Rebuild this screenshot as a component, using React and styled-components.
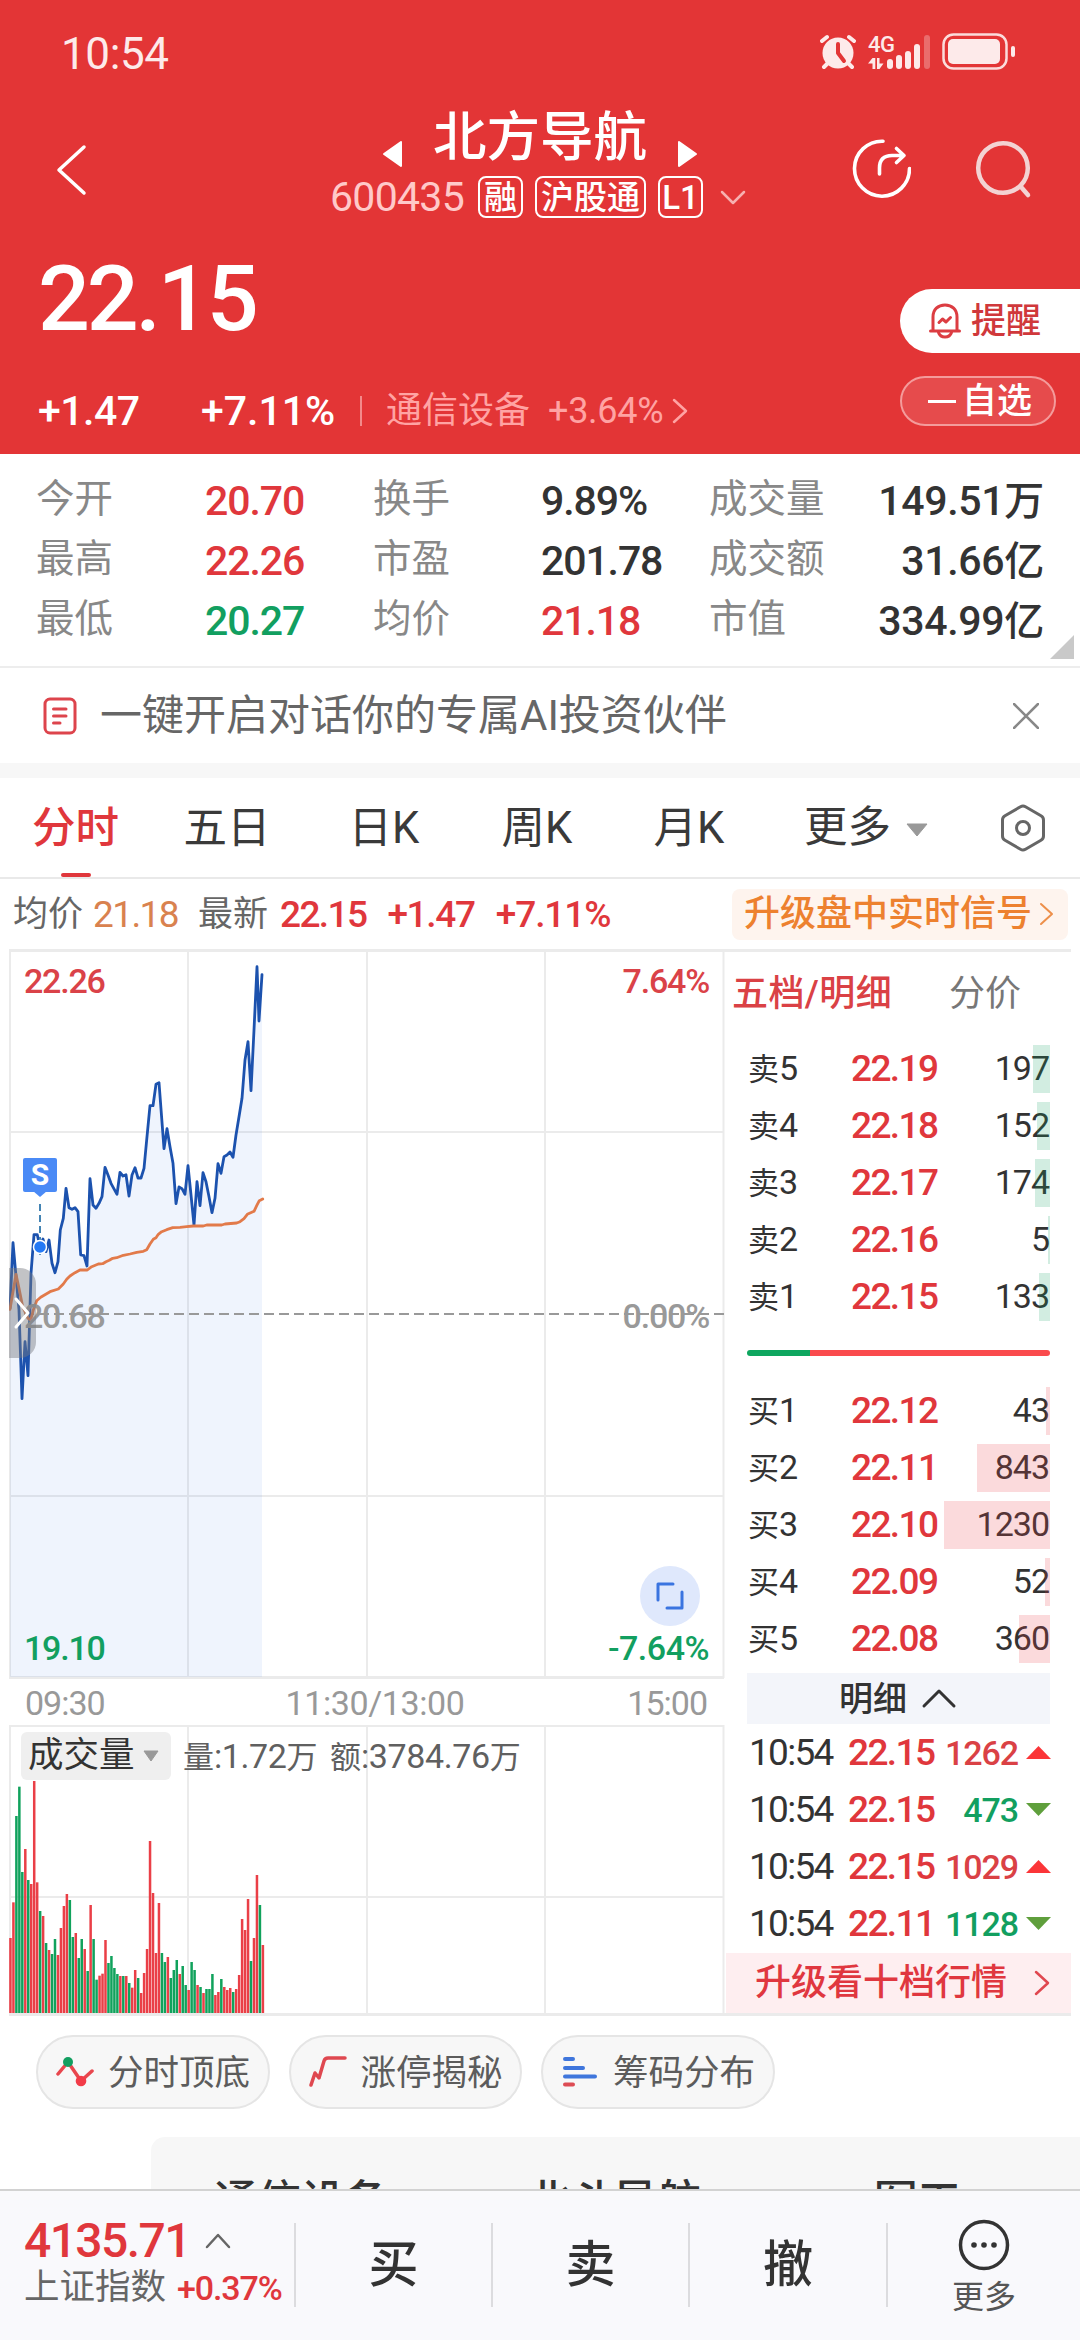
import React from "react";
import styled, { createGlobalStyle, css } from "styled-components";

const RED = "#e0373c";
const GREEN = "#129f60";
const INK = "#333333";
const GRAY = "#888888";
const LINE = "#ebebeb";

const GlobalStyle = createGlobalStyle`
  * { box-sizing: border-box; }
  body {
    margin: 0;
    background: #fff;
    font-family: Roboto, "Noto Sans CJK SC", sans-serif;
    color: ${INK};
  }
  svg { display: block; flex: none; }
`;

const Screen = styled.div`
  width: 1080px;
  height: 2340px;
  overflow: hidden;
  display: flex;
  flex-direction: column;
  background: #fff;
  line-height: 1;
  white-space: nowrap;
`;

/* ---------- shared ---------- */

const Num = styled.span`
  font-size: ${(p) => p.$size || 37}px;
  font-weight: ${(p) => p.$weight || 500};
  letter-spacing: ${(p) => (p.$ls === undefined ? -1.6 : p.$ls)}px;
  color: ${(p) => p.$color || "inherit"};
`;

const CHEVRONS = {
  left: (w, h) => `${w},0 0,${h / 2} ${w},${h}`,
  right: (w, h) => `0,0 ${w},${h / 2} 0,${h}`,
  up: (w, h) => `0,${h} ${w / 2},0 ${w},${h}`,
  down: (w, h) => `0,0 ${w / 2},${h} ${w},0`,
};

function Chevron({ dir, w, h, color, stroke = 2.5 }) {
  return (
    <svg width={w} height={h} viewBox={`0 0 ${w} ${h}`} overflow="visible">
      <polyline
        points={CHEVRONS[dir](w, h)}
        fill="none"
        stroke={color}
        strokeWidth={stroke}
        strokeLinecap="round"
        strokeLinejoin="round"
      />
    </svg>
  );
}

function Triangle({ dir, w, h, color, round = 0 }) {
  const shapes = {
    up: `0,${h} ${w / 2},0 ${w},${h}`,
    down: `0,0 ${w},0 ${w / 2},${h}`,
    left: `${w},0 0,${h / 2} ${w},${h}`,
    right: `0,0 ${w},${h / 2} 0,${h}`,
    corner: `${w},0 ${w},${h} 0,${h}`,
  };
  return (
    <svg width={w} height={h} viewBox={`0 0 ${w} ${h}`} overflow="visible">
      <polygon points={shapes[dir]} fill={color} stroke={color} strokeWidth={round} strokeLinejoin="round" />
    </svg>
  );
}

/* ---------- header ---------- */

const Header = styled.header`
  height: 454px;
  background: #e33536;
  color: #fff;
  display: flex;
  flex-direction: column;
`;

const StatusBar = styled.div`
  height: 106px;
  padding: 2px 64px 0 61px;
  display: flex;
  align-items: center;
  justify-content: space-between;
  color: #fdeaea;
`;

const StatusIcons = styled.div`
  display: flex;
  align-items: center;
  margin-top: -5px;
`;

const NavBar = styled.div`
  height: 134px;
  display: grid;
  grid-template-columns: 300px 1fr 300px;
`;

const NavBack = styled.div`
  padding: 41px 0 0 59px;
`;

const NavCenter = styled.div`
  display: flex;
  flex-direction: column;
`;

const StockName = styled.h1`
  margin: -1px 0 0;
  height: 66px;
  display: flex;
  align-items: center;
  justify-content: center;
  gap: 32px;
  font-size: 53.5px;
  font-weight: 500;
  svg { margin-top: 32px; }
`;

const StockMeta = styled.div`
  height: 50px;
  margin-top: 1px;
  padding-left: 30px;
  display: flex;
  align-items: center;
  color: #ffc9c9;
`;

const Tag = styled.span`
  height: 42px;
  width: ${(p) => p.$w}px;
  margin-right: 12px;
  border: 2px solid #fff;
  border-radius: 8px;
  display: flex;
  align-items: center;
  justify-content: center;
  font-size: 33px;
  font-weight: 500;
  color: #fff;
`;

const MetaChevron = styled.span`
  margin-left: 7px;
`;

const NavActions = styled.div`
  display: flex;
  padding: 33px 0 0 71px;
  gap: 63px;
`;

const QuoteArea = styled.div`
  flex: 1;
  display: grid;
  grid-template-columns: 1fr 180px;
`;

const QuoteMain = styled.div`
  padding: 10px 0 0 38px;
`;

const Price = styled.div`
  height: 98px;
  display: flex;
  align-items: center;
  font-size: 91.5px;
  font-weight: 500;
  letter-spacing: -3.2px;
`;

const ChangeRow = styled.div`
  margin-top: 43px;
  height: 40px;
  display: flex;
  align-items: center;
`;

const ChangeCell = styled.span`
  width: ${(p) => p.$w}px;
`;

const ChangeDivider = styled.span`
  width: 2px;
  height: 30px;
  margin-right: 24px;
  background: #f38a8a;
`;

const SectorLink = styled.span`
  display: flex;
  align-items: center;
  font-size: 36px;
  color: #ffa3a3;
`;

const SectorChange = styled(Num)`
  margin: 0 11px 0 18px;
`;

const QuoteSide = styled.div`
  padding-top: 49px;
  display: flex;
  flex-direction: column;
  align-items: flex-start;
  gap: 23px;
`;

const AlertButton = styled.div`
  width: 180px;
  height: 64px;
  padding-left: 28px;
  border-radius: 32px 0 0 32px;
  background: #fff;
  color: #d0383b;
  display: flex;
  align-items: center;
  gap: 9px;
  font-size: 35px;
  font-weight: 500;
`;

const WatchButton = styled.div`
  width: 156px;
  height: 50px;
  padding-left: 26px;
  border: 2px solid #f49b9b;
  border-radius: 25px;
  background: #e64b4c;
  display: flex;
  align-items: center;
  gap: 6px;
  font-size: 35px;
  font-weight: 500;
`;

const Minus = styled.span`
  width: 28px;
  height: 3px;
  background: #fff;
`;

/* ---------- stats ---------- */

const Stats = styled.section`
  height: 214px;
  padding: 15px 0 0 36px;
  border-bottom: 2px solid #ededed;
  display: flex;
`;

const StatGrid = styled.div`
  width: 1008px;
  height: 180px;
  display: grid;
  grid-template-columns: 169px 168px 168px 168px 120px 1fr;
  grid-template-rows: repeat(3, 60px);
  align-items: center;
`;

const StatLabel = styled.span`
  font-size: 38.5px;
  color: ${GRAY};
`;

const StatValue = styled.span`
  font-size: 41px;
  font-weight: 500;
  letter-spacing: ${(p) => (p.$end ? -0.3 : -1.1)}px;
  padding-top: 4px;
  color: ${(p) => p.$color || INK};
  text-align: ${(p) => (p.$end ? "right" : "left")};
  em { font-style: normal; font-size: 40px; }
`;

const StatCorner = styled.div`
  margin: 166px 0 0 6px;
`;

/* ---------- AI notice ---------- */

const Notice = styled.section`
  height: 95px;
  padding: 0 41px 0 43px;
  display: flex;
  align-items: center;
  font-size: 42px;
  color: #666;
  svg:last-child { margin-left: auto; }
`;

const NoticeText = styled.span`
  margin-left: 23px;
`;

const Gap = styled.div`
  height: 15px;
  background: #f7f7f7;
`;

/* ---------- tabs ---------- */

const Tabs = styled.nav`
  height: 101px;
  border-bottom: 2px solid #e9e9e9;
  display: grid;
  grid-template-columns: 151px 152px 162px 144px 160px 1fr 80px;
`;

const Tab = styled.div`
  display: flex;
  flex-direction: column;
  align-items: center;
  justify-content: flex-end;
  font-size: 43.5px;
  font-weight: ${(p) => (p.$active ? 500 : 400)};
  color: ${(p) => (p.$active ? RED : "#3a3a3a")};
  &::after {
    content: "";
    width: 30px;
    height: 4px;
    margin-top: 23px;
    border-radius: 2px;
    background: ${(p) => (p.$active ? RED : "transparent")};
  }
`;

const MoreTab = styled.div`
  display: flex;
  align-items: center;
  gap: 16px;
  padding-left: 35px;
  font-size: 43.5px;
  color: #3a3a3a;
  svg { margin-top: 4px; }
`;

const TabSettings = styled.div`
  display: flex;
  align-items: center;
`;

/* ---------- info strip ---------- */

const InfoStrip = styled.div`
  height: 70px;
  padding: 0 12px 0 13px;
  display: flex;
  align-items: center;
  font-size: 35px;
  color: #666;
`;

const InfoNum = styled(Num)`
  margin-left: ${(p) => p.$gap}px;
`;

const InfoLabel = styled.span`
  margin-left: ${(p) => p.$gap || 0}px;
`;

const SignalButton = styled.div`
  width: 336px;
  height: 51px;
  margin: 0 0 0 auto;
  padding: 0 16px 0 12px;
  border-radius: 8px;
  background: #fef4ee;
  color: #ed812f;
  display: flex;
  align-items: center;
  justify-content: space-between;
  font-size: 36px;
  font-weight: 500;
`;

/* ---------- market area ---------- */

const Market = styled.section`
  height: 1067px;
  margin: 0 9px;
  border-top: 3px solid ${LINE};
  border-bottom: 3px solid ${LINE};
  display: grid;
  grid-template-columns: 717px 1fr;
`;

const Charts = styled.div`
  display: flex;
  flex-direction: column;
`;

const PlotBox = styled.div`
  position: relative;
  height: ${(p) => p.$h}px;
`;

const PlotLabel = styled.span`
  position: absolute;
  font-size: 34px;
  font-weight: 500;
  letter-spacing: ${(p) => p.$ls || -1.2}px;
  color: ${(p) => p.$color};
  ${(p) => (p.$right ? css`right: 17px;` : css`left: 15px;`)}
  top: ${(p) => p.$top}px;
`;

const Handle = styled.div`
  position: absolute;
  left: 0;
  top: 316px;
  width: 27px;
  height: 90px;
  padding-left: 7px;
  border-radius: 0 16px 16px 0;
  background: rgba(120, 122, 128, 0.45);
  display: flex;
  align-items: center;
`;

const SellMarker = styled.div`
  position: absolute;
  left: 14px;
  top: 206px;
  width: 34px;
  height: 34px;
  border-radius: 2px;
  background: #4a8af6;
  color: #fff;
  display: flex;
  align-items: center;
  justify-content: center;
  font-size: 30px;
  font-weight: 700;
`;

const ExpandButton = styled.div`
  position: absolute;
  left: 631px;
  top: 614px;
  width: 60px;
  height: 60px;
  border-radius: 50%;
  background: #dfe8fc;
  display: flex;
  align-items: center;
  justify-content: center;
`;

const TimeAxis = styled.div`
  height: 45px;
  padding: 0 19px 0 16px;
  display: grid;
  grid-template-columns: 1fr auto 1fr;
  align-items: center;
  font-size: 34px;
  letter-spacing: -1px;
  color: #999;
  span:last-child { text-align: right; }
`;

const AxisMid = styled.span`
  padding-left: 18px;
  letter-spacing: -0.4px;
`;

const VolumeHead = styled.div`
  position: absolute;
  left: 12px;
  top: 7px;
  height: 48px;
  display: flex;
  align-items: center;
`;

const VolumePicker = styled.div`
  width: 150px;
  height: 48px;
  margin-right: 12px;
  padding-left: 7px;
  border-radius: 6px;
  background: #efefef;
  display: flex;
  align-items: center;
  gap: 9px;
  font-size: 35.5px;
`;

const VolumeText = styled.span`
  width: ${(p) => p.$w}px;
  font-size: 34px;
  letter-spacing: -0.4px;
  color: #606060;
  em { font-style: normal; font-size: 31px; letter-spacing: 0; }
`;

/* ---------- order book ---------- */

const Book = styled.aside`
  display: flex;
  flex-direction: column;
`;

const BookTabs = styled.div`
  height: 84px;
  padding-left: 6px;
  display: flex;
  align-items: center;
  font-size: 36px;
`;

const BookTab = styled.span`
  width: ${(p) => p.$w}px;
  letter-spacing: ${(p) => (p.$active ? 0.4 : 0)}px;
  color: ${(p) => (p.$active ? "#da4145" : "#777")};
  font-weight: ${(p) => (p.$active ? 500 : 400)};
`;

const BookBody = styled.div`
  width: 303px;
  margin-left: 21px;
  display: flex;
  flex-direction: column;
`;

const Levels = styled.div`
  display: flex;
  flex-direction: column;
  gap: 9px;
  padding: 9px 0;
`;

const LevelRow = styled.div`
  position: relative;
  height: 48px;
  padding: 0 0 2px 1px;
  display: grid;
  grid-template-columns: 103px 100px 1fr;
  align-items: center;
  font-size: 34px;
  em { font-style: normal; font-size: 31px; }
`;

const LevelVolume = styled.span`
  padding-right: 1px;
  text-align: right;
  letter-spacing: -1px;
`;

const LevelBar = styled.i`
  position: absolute;
  right: 0;
  top: 0;
  height: 48px;
  background: ${(p) => (p.$side === "sell" ? "rgba(18,159,96,0.19)" : "rgba(235,60,70,0.19)")};
`;

const Balance = styled.div`
  height: 6px;
  margin: 20px 0 22px;
  border-radius: 3px;
  background: linear-gradient(90deg, #0ea65f 63px, #fa4b4d 63px);
`;

const DetailToggle = styled.div`
  height: 51px;
  margin-top: 1px;
  padding-right: 4px;
  background: #f3f5fa;
  display: flex;
  align-items: center;
  justify-content: center;
  gap: 17px;
  font-size: 34px;
  font-weight: 500;
`;

const Ticks = styled.div`
  display: flex;
  flex-direction: column;
  height: 229px;
`;

const Tick = styled.div`
  height: 57px;
  display: grid;
  grid-template-columns: 99px 90px 80px 1fr;
  align-items: center;
  padding: 0 0 0 2px;
  svg { margin-left: 8px; }
`;

const TickVolume = styled(Num)`
  text-align: right;
`;

const Upgrade = styled.div`
  height: 60px;
  padding: 0 23px 0 29px;
  background: #feeef0;
  color: #e0373f;
  display: flex;
  align-items: center;
  justify-content: space-between;
  font-size: 36px;
  font-weight: 500;
`;

/* ---------- lower part ---------- */

const Chips = styled.div`
  display: flex;
  gap: 19px;
  padding: 19px 36px 28px;
`;

const Chip = styled.div`
  width: 233.5px;
  height: 74px;
  padding-left: 18px;
  border: 2px solid #e5e5e5;
  border-radius: 37px;
  background: #f7f7f7;
  display: flex;
  align-items: center;
  gap: 14px;
  font-size: 35.5px;
  color: #5c5c5c;
  span { padding-top: 3px; }
`;

const BoardCard = styled.div`
  height: 52px;
  margin-left: 151px;
  padding: 43px 0 0 63px;
  overflow: hidden;
  border-top-left-radius: 14px;
  background: #f7f7f7;
  display: grid;
  grid-template-columns: 313px 347px 1fr;
  font-size: 43.5px;
  font-weight: 500;
`;

const BottomBar = styled.footer`
  height: 151px;
  border-top: 2px solid #d2d2d2;
  background: #f9f9fc;
  display: grid;
  grid-template-columns: 294px 197px 197px 198px 1fr;
  padding-top: 32px;
`;

const IndexBox = styled.div`
  padding-left: 24px;
  display: flex;
  flex-direction: column;
`;

const IndexLine = styled.div`
  height: ${(p) => p.$h}px;
  display: flex;
  align-items: center;
  gap: ${(p) => p.$gap}px;
  font-size: 35.5px;
  color: #666;
`;

const TradeAction = styled.div`
  height: 84px;
  border-left: 2px solid #dcdcdf;
  display: flex;
  align-items: center;
  justify-content: center;
  font-size: 50px;
  font-weight: 500;
`;

const MoreAction = styled.div`
  height: 84px;
  border-left: 2px solid #dcdcdf;
  display: flex;
  flex-direction: column;
  align-items: center;
  font-size: 32px;
  color: #555;
  gap: 10px;
  svg { margin-top: -4px; }
`;

/* ---------- icons ---------- */

const AlarmIcon = () => (
  <svg width="36" height="36" viewBox="0 0 36 36">
    <g stroke="#fdeaea" strokeWidth="4" strokeLinecap="round">
      <path d="M2 7 7 3M29 3l5 4M8 29l-4 4M28 29l4 4" />
    </g>
    <circle cx="18" cy="19" r="15.5" fill="#fdeaea" />
    <path d="M18 10v9l6 8" fill="none" stroke="#e33536" strokeWidth="4" strokeLinecap="round" strokeLinejoin="round" />
  </svg>
);

const SignalBox = styled.div`
  display: flex;
  flex-direction: column;
  width: 62px;
  height: 36px;
  margin: 0 12px 0 12px;
  position: relative;
  font-size: 22px;
  font-weight: 500;
  letter-spacing: -0.5px;
  svg { position: absolute; left: 0; top: 0; }
`;

const SignalIcon = () => (
  <SignalBox>
    4G
    <svg width="62" height="36" viewBox="0 0 62 36">
      <g fill="#fdeaea">
        <rect x="19" y="25" width="6" height="10" rx="3" />
        <rect x="28" y="21" width="6" height="14" rx="3" />
        <rect x="37" y="17" width="6" height="18" rx="3" />
        <rect x="46" y="10" width="6" height="25" rx="3" />
        <rect x="56" y="1" width="6" height="34" rx="3" opacity=".3" />
        <path d="M4.500 24v11h2.800V24zM4.500 24 0 29.500h4.500zM9 24v11h2.500V24zM11.500 35l4-5.500h-4z" />
      </g>
    </svg>
  </SignalBox>
);

const BatteryIcon = () => (
  <svg width="74" height="38" viewBox="0 0 74 38">
    <rect x="1.500" y="1.500" width="63" height="34" rx="10" fill="none" stroke="#fbdcdc" strokeWidth="2.500" />
    <rect x="6" y="6" width="52" height="25" rx="5" fill="#fdeaea" />
    <rect x="69" y="13" width="4" height="11" rx="2" fill="#fdeaea" />
  </svg>
);

const ShareIcon = () => (
  <svg width="60" height="60" viewBox="0 0 60 60" fill="none" stroke="#fff" strokeWidth="3.600" strokeLinecap="round" strokeLinejoin="round">
    <path d="M32 2.200A27.500 27.500 0 1 0 58.500 29.500" />
    <path d="M28.500 35V29q0-12.500 12.500-12.500H53M45.500 9.500 53 16.500 45.500 23.500" />
  </svg>
);

const SearchIcon = () => (
  <svg width="58" height="60" viewBox="0 0 58 60" fill="none" stroke="#f3d3d3" strokeWidth="4.500" strokeLinecap="round">
    <circle cx="29" cy="29" r="24.800" />
    <path d="M47.500 48.500 54 56" />
  </svg>
);

const BellIcon = () => (
  <svg width="34" height="36" viewBox="0 0 34 36" fill="none" stroke="#dc3d42" strokeWidth="3" strokeLinecap="round" strokeLinejoin="round">
    <path d="M2.500 28H31.500M5 27V14C5 6.500 10 2 17 2S29 6.500 29 14V27" />
    <path d="M10.500 29.500Q12 34 17 34T23.500 29.500" />
    <path d="M11 19.500 14.500 16 18 19 22.500 14.500" />
  </svg>
);

const NoticeIcon = () => (
  <svg width="34" height="38" viewBox="0 0 34 38" fill="none" stroke="#dd444c" strokeWidth="3" strokeLinecap="round">
    <rect x="2" y="2" width="30" height="34" rx="5" />
    <path d="M10.500 12H23M10.500 19H23M10.500 26H17" />
  </svg>
);

const CloseIcon = () => (
  <svg width="26" height="26" viewBox="0 0 26 26" stroke="#888" strokeWidth="2.500" strokeLinecap="round">
    <path d="M1 1 25 25M25 1 1 25" />
  </svg>
);

const HexIcon = () => (
  <svg width="46" height="48" viewBox="0 0 46 48" fill="none" stroke="#666" strokeWidth="3" strokeLinejoin="round">
    <path d="M20.500 2.700Q23 1.300 25.500 2.700L41 11.800Q43.500 13.300 43.500 16V32Q43.500 34.700 41 36.200L25.500 45.300Q23 46.700 20.500 45.300L5 36.200Q2.500 34.700 2.500 32V16Q2.500 13.300 5 11.800Z" />
    <circle cx="23" cy="24" r="6.500" />
  </svg>
);

const TopBottomIcon = () => (
  <svg width="38" height="32" viewBox="0 0 38 32">
    <path d="M2 18 12 6 25 25 36 15" fill="none" stroke="#e8474e" strokeWidth="3.500" strokeLinecap="round" strokeLinejoin="round" />
    <circle cx="12" cy="6" r="5" fill="#129f60" />
    <circle cx="25" cy="25" r="5.300" fill="#f23c48" />
  </svg>
);

const LimitUpIcon = () => (
  <svg width="38" height="32" viewBox="0 0 38 32">
    <path d="M2 29 6 17 10 22 15 5Q16 2 19 2H36" fill="none" stroke="#df4850" strokeWidth="3.500" strokeLinecap="round" strokeLinejoin="round" />
  </svg>
);

const ChipsIcon = () => (
  <svg width="38" height="32" viewBox="0 0 38 32" strokeWidth="4" strokeLinecap="round">
    <path d="M4 3H12M4 12H22M4 20.500H34" stroke="#3f76dc" />
    <path d="M4 28.500H12" stroke="#dd4c54" />
  </svg>
);

const ExpandIcon = () => (
  <svg width="28" height="28" viewBox="0 0 28 28" fill="none" stroke="#3a74e0" strokeWidth="3" strokeLinecap="round" strokeLinejoin="round">
    <path d="M2 18V2H17M26 10V26H11" />
  </svg>
);

const DotsIcon = () => (
  <svg width="52" height="52" viewBox="0 0 52 52">
    <circle cx="26" cy="26" r="23.500" fill="none" stroke="#333" strokeWidth="3.500" />
    <circle cx="16" cy="26" r="2.800" fill="#333" />
    <circle cx="26" cy="26" r="2.800" fill="#333" />
    <circle cx="36" cy="26" r="2.800" fill="#333" />
  </svg>
);

/* ---------- data ---------- */

const STATS = [
  ["今开", "20.70", RED], ["换手", "9.89%"], ["成交量", "149.51", null, "万"],
  ["最高", "22.26", RED], ["市盈", "201.78"], ["成交额", "31.66", null, "亿"],
  ["最低", "20.27", GREEN], ["均价", "21.18", RED], ["市值", "334.99", null, "亿"],
];

const SELLS = [
  ["卖", 5, "22.19", 197, 17], ["卖", 4, "22.18", 152, 13], ["卖", 3, "22.17", 174, 15],
  ["卖", 2, "22.16", 5, 2], ["卖", 1, "22.15", 133, 11],
];

const BUYS = [
  ["买", 1, "22.12", 43, 4], ["买", 2, "22.11", 843, 73], ["买", 3, "22.10", 1230, 106],
  ["买", 4, "22.09", 52, 5], ["买", 5, "22.08", 360, 31],
];

const TICKS = [
  ["22.15", 1262, "up"], ["22.15", 473, "down"], ["22.15", 1029, "up"], ["22.11", 1128, "down"],
];

/* Chart points are kept in thirds of a pixel, origin at the plot's top left. */
const PRICE = [
  30, 1105, 39, 908, 57, 1110, 66, 1376, 75, 1205, 84, 1307, 93, 1000, 102, 884, 112, 884, 120, 920,
  129, 897, 138, 935, 147, 900, 156, 970, 165, 998, 174, 965, 181, 870, 190, 835, 198, 745, 207, 803,
  216, 808, 225, 803, 234, 815, 242, 945, 252, 947, 261, 978, 270, 716, 279, 795, 288, 805, 297, 790,
  306, 770, 315, 682, 324, 705, 333, 730, 351, 763, 360, 697, 369, 708, 378, 704, 387, 768, 396, 705,
  405, 683, 414, 714, 423, 714, 432, 685, 441, 590, 450, 497, 459, 497, 468, 433, 477, 428, 492, 626,
  501, 566, 510, 620, 519, 670, 528, 791, 537, 741, 546, 746, 555, 763, 564, 677, 573, 765, 582, 855,
  591, 725, 600, 797, 609, 698, 618, 725, 627, 770, 636, 818, 645, 775, 654, 671, 663, 700, 672, 650,
  681, 645, 690, 636, 699, 652, 708, 585, 717, 530, 726, 475, 735, 360, 744, 305, 753, 452, 762, 270,
  771, 80, 777, 243, 786, 104,
];

const AVERAGE = [
  30, 1108, 48, 1003, 57, 1045, 68, 1100, 84, 1135, 92, 1140, 100, 1110, 110, 1082, 122, 1072, 150, 1055,
  175, 1047, 190, 1032, 200, 1018, 210, 1008, 225, 998, 240, 990, 262, 990, 275, 980, 295, 972, 308, 971,
  318, 965, 328, 961, 338, 955, 350, 953, 370, 946, 390, 942, 410, 937, 430, 934, 440, 929, 450, 912,
  460, 898, 468, 893, 475, 883, 485, 875, 500, 869, 518, 863, 540, 862, 560, 860, 580, 858, 610, 858,
  620, 855, 665, 855, 675, 852, 710, 849, 720, 845, 732, 836, 742, 823, 762, 814, 770, 797, 778, 782, 788, 777,
];

const toPoints = (flat) => {
  const out = [];
  for (let i = 0; i < flat.length; i += 2) {
    out.push(`${(flat[i] / 3 - 9).toFixed(1)},${((flat[i + 1] - 36) / 3).toFixed(1)}`);
  }
  return out.join(" ");
};

const VOLUME_TOPS = [
  897, 790, 531, 443, 699, 630, 723, 735, 426, 730, 816, 831, 912, 933, 945, 900, 948, 867, 801, 765,
  783, 894, 882, 957, 900, 930, 996, 798, 900, 1022, 1010, 1004, 903, 972, 951, 987, 1005, 1011, 1011, 1011,
  1032, 1046, 993, 1017, 1062, 1002, 930, 606, 762, 942, 792, 942, 969, 954, 1017, 993, 963, 1005, 981, 1038,
  1053, 969, 993, 1038, 1044, 1062, 1050, 1050, 1005, 1068, 1059, 1020, 1044, 1053, 1047, 1059, 1050, 1008,
  840, 873, 780, 966, 897, 708, 798, 918,
];
const VOLUME_SIDES =
  "rrgggrgrrrgrgrggrrrrggrggrgrggrrrggggrgrgrrgrrrrrrrggrgggrgg" + "rggrgrgggrrgrrrgrrrrrgrrgr";

const GRID_X = [1, 179, 358, 536, 714.5];

function PricePlot() {
  const price = toPoints(PRICE);
  return (
    <svg width="717" height="728" viewBox="0 0 717 728">
      <g stroke={LINE} strokeWidth="2">
        {GRID_X.map((x) => <line key={x} x1={x} x2={x} y1="0" y2="726" />)}
        <line x1="0" x2="715" y1="180" y2="180" />
        <line x1="0" x2="715" y1="544" y2="544" />
        <line x1="0" x2="715" y1="725.5" y2="725.5" strokeWidth="3" />
      </g>
      <polygon points={`1,725 ${price} 253,725`} fill="rgba(65,125,235,0.085)" />
      <line x1="15" x2="715" y1="362" y2="362" stroke="#999" strokeWidth="2" strokeDasharray="10 5" />
      <polyline points={price} fill="none" stroke="#1c52ae" strokeWidth="2.8" strokeLinejoin="round" strokeLinecap="round" />
      <polyline points={toPoints(AVERAGE)} fill="none" stroke="#e27a4a" strokeWidth="2.8" strokeLinejoin="round" strokeLinecap="round" />
      <path d="M24 239h14l-7 6z" fill="#4a8af6" />
      <line x1="31" x2="31" y1="252" y2="306" stroke="#4384b4" strokeWidth="2" strokeDasharray="7 4" />
      <circle cx="31" cy="295" r="6.5" fill="#2479f5" stroke="#fff" strokeWidth="1.5" />
    </svg>
  );
}

function VolumePlot() {
  return (
    <svg width="717" height="288" viewBox="0 0 717 288">
      <g stroke={LINE} strokeWidth="2">
        {GRID_X.map((x) => <line key={x} x1={x} x2={x} y1="0" y2="288" />)}
        <line x1="0" x2="715" y1="1" y2="1" />
        <line x1="0" x2="715" y1="172" y2="172" />
      </g>
      {VOLUME_TOPS.map((top, i) => {
        const h = (1122 - top) / 3;
        return (
          <rect
            key={i}
            x={0.2 + i * 2.97}
            y={288 - h}
            width="2.5"
            height={h}
            fill={VOLUME_SIDES[i] === "r" ? "#ea3f47" : "#10a25c"}
          />
        );
      })}
    </svg>
  );
}

function LevelList({ rows, side }) {
  return (
    <Levels>
      {rows.map(([name, n, price, volume, width]) => (
        <LevelRow key={n}>
          <span><em>{name}</em>{n}</span>
          <Num $color={RED}>{price}</Num>
          <LevelVolume>{volume}</LevelVolume>
          <LevelBar $side={side} style={{ width }} />
        </LevelRow>
      ))}
    </Levels>
  );
}

export default function App() {
  return (
    <Screen>
      <GlobalStyle />
      <Header>
        <StatusBar>
          <Num $size={44} $weight={400} $ls={-0.4}>10:54</Num>
          <StatusIcons>
            <AlarmIcon />
            <SignalIcon />
            <BatteryIcon />
          </StatusIcons>
        </StatusBar>
        <NavBar>
          <NavBack><Chevron dir="left" w={25} h={46} color="#fff" stroke={3.5} /></NavBack>
          <NavCenter>
            <StockName>
              <Triangle dir="left" w={17} h={24} color="#fff" round={2} />
              <span>北方导航</span>
              <Triangle dir="right" w={17} h={24} color="#fff" round={2} />
            </StockName>
            <StockMeta>
              <ChangeCell $w={148}><Num $size={41} $weight={400} $ls={-0.7}>600435</Num></ChangeCell>
              <Tag $w={45}>融</Tag>
              <Tag $w={111}>沪股通</Tag>
              <Tag $w={45}>L1</Tag>
              <MetaChevron><Chevron dir="down" w={22} h={11} color="#f7b0b0" /></MetaChevron>
            </StockMeta>
          </NavCenter>
          <NavActions>
            <ShareIcon />
            <SearchIcon />
          </NavActions>
        </NavBar>
        <QuoteArea>
          <QuoteMain>
            <Price>22.15</Price>
            <ChangeRow>
              <ChangeCell $w={163}><Num $size={41} $ls={-0.5}>+1.47</Num></ChangeCell>
              <ChangeCell $w={159}><Num $size={41} $ls={0}>+7.11%</Num></ChangeCell>
              <ChangeDivider />
              <SectorLink>
                通信设备
                <SectorChange $size={36} $weight={400} $ls={-0.3}>+3.64%</SectorChange>
                <Chevron dir="right" w={12} h={22} color="#ffa3a3" />
              </SectorLink>
            </ChangeRow>
          </QuoteMain>
          <QuoteSide>
            <AlertButton><BellIcon />提醒</AlertButton>
            <WatchButton><Minus />自选</WatchButton>
          </QuoteSide>
        </QuoteArea>
      </Header>

      <Stats>
        <StatGrid>
          {STATS.map(([label, value, color, unit], i) => (
            <React.Fragment key={i}>
              <StatLabel>{label}</StatLabel>
              <StatValue $color={color} $end={i % 3 === 2}>{value}{unit && <em>{unit}</em>}</StatValue>
            </React.Fragment>
          ))}
        </StatGrid>
        <StatCorner><Triangle dir="corner" w={24} h={24} color="#c9c9c9" /></StatCorner>
      </Stats>

      <Notice>
        <NoticeIcon />
        <NoticeText>一键开启对话你的专属AI投资伙伴</NoticeText>
        <CloseIcon />
      </Notice>
      <Gap />

      <Tabs>
        <Tab $active>分时</Tab>
        <Tab>五日</Tab>
        <Tab>日K</Tab>
        <Tab>周K</Tab>
        <Tab>月K</Tab>
        <MoreTab>更多<Triangle dir="down" w={20} h={12} color="#999" round={1} /></MoreTab>
        <TabSettings><HexIcon /></TabSettings>
      </Tabs>

      <InfoStrip>
        <span>均价</span>
        <InfoNum $gap={10} $weight={400} $color="#d9824f">21.18</InfoNum>
        <InfoLabel $gap={20}>最新</InfoLabel>
        <InfoNum $gap={12} $color={RED}>22.15</InfoNum>
        <InfoNum $gap={21} $ls={-1.3} $color={RED}>+1.47</InfoNum>
        <InfoNum $gap={21} $ls={-1.1} $color={RED}>+7.11%</InfoNum>
        <SignalButton>
          升级盘中实时信号
          <Chevron dir="right" w={11} h={20} color="#ed8f4a" stroke={2} />
        </SignalButton>
      </InfoStrip>

      <Market>
        <Charts>
          <PlotBox $h={728}>
            <PricePlot />
            <PlotLabel $top={12} $color="#da4248">22.26</PlotLabel>
            <PlotLabel $top={12} $right $color="#da4248">7.64%</PlotLabel>
            <PlotLabel $top={347} $color="#999">20.68</PlotLabel>
            <PlotLabel $top={347} $right $color="#999">0.00%</PlotLabel>
            <PlotLabel $top={679} $color={GREEN}>19.10</PlotLabel>
            <PlotLabel $top={679} $right $ls={-0.5} $color={GREEN}>-7.64%</PlotLabel>
            <Handle><Chevron dir="right" w={12} h={28} color="#fff" stroke={3} /></Handle>
            <SellMarker>S</SellMarker>
            <ExpandButton><ExpandIcon /></ExpandButton>
          </PlotBox>
          <TimeAxis>
            <span>09:30</span>
            <AxisMid>11:30/13:00</AxisMid>
            <span>15:00</span>
          </TimeAxis>
          <PlotBox $h={288}>
            <VolumePlot />
            <VolumeHead>
              <VolumePicker>成交量<Triangle dir="down" w={14} h={10} color="#999" round={1} /></VolumePicker>
              <VolumeText $w={147}><em>量</em>:1.72<em>万</em></VolumeText>
              <VolumeText $w={200}><em>额</em>:3784.76<em>万</em></VolumeText>
            </VolumeHead>
          </PlotBox>
        </Charts>
        <Book>
          <BookTabs>
            <BookTab $active $w={217}>五档/明细</BookTab>
            <BookTab>分价</BookTab>
          </BookTabs>
          <BookBody>
            <LevelList rows={SELLS} side="sell" />
            <Balance />
            <LevelList rows={BUYS} side="buy" />
            <DetailToggle>
              明细
              <Chevron dir="up" w={30} h={15} color={INK} stroke={3} />
            </DetailToggle>
            <Ticks>
              {TICKS.map(([price, volume, dir], i) => (
                <Tick key={i}>
                  <Num $weight={400} $ls={-1.7}>10:54</Num>
                  <Num $color={RED}>{price}</Num>
                  <TickVolume $size={34} $ls={-1.1} $color={dir === "up" ? "#da4145" : GREEN}>{volume}</TickVolume>
                  <Triangle dir={dir} w={25} h={13} color={dir === "up" ? "#fb3538" : "#5f9f3c"} />
                </Tick>
              ))}
            </Ticks>
          </BookBody>
          <Upgrade>
            升级看十档行情
            <Chevron dir="right" w={12} h={22} color="#e0474f" />
          </Upgrade>
        </Book>
      </Market>

      <Chips>
        <Chip><TopBottomIcon /><span>分时顶底</span></Chip>
        <Chip><LimitUpIcon /><span>涨停揭秘</span></Chip>
        <Chip><ChipsIcon /><span>筹码分布</span></Chip>
      </Chips>
      <BoardCard>
        <span>通信设备</span>
        <span>北斗导航</span>
        <span>军工</span>
      </BoardCard>

      <BottomBar>
        <IndexBox>
          <IndexLine $h={36} $gap={17}>
            <Num $size={48} $color={RED}>4135.71</Num>
            <Chevron dir="up" w={22} h={12} color="#666" />
          </IndexLine>
          <IndexLine $h={57} $gap={11}>
            上证指数
            <Num $size={34} $ls={-1.1} $color={RED}>+0.37%</Num>
          </IndexLine>
        </IndexBox>
        <TradeAction>买</TradeAction>
        <TradeAction>卖</TradeAction>
        <TradeAction>撤</TradeAction>
        <MoreAction><DotsIcon />更多</MoreAction>
      </BottomBar>
    </Screen>
  );
}
